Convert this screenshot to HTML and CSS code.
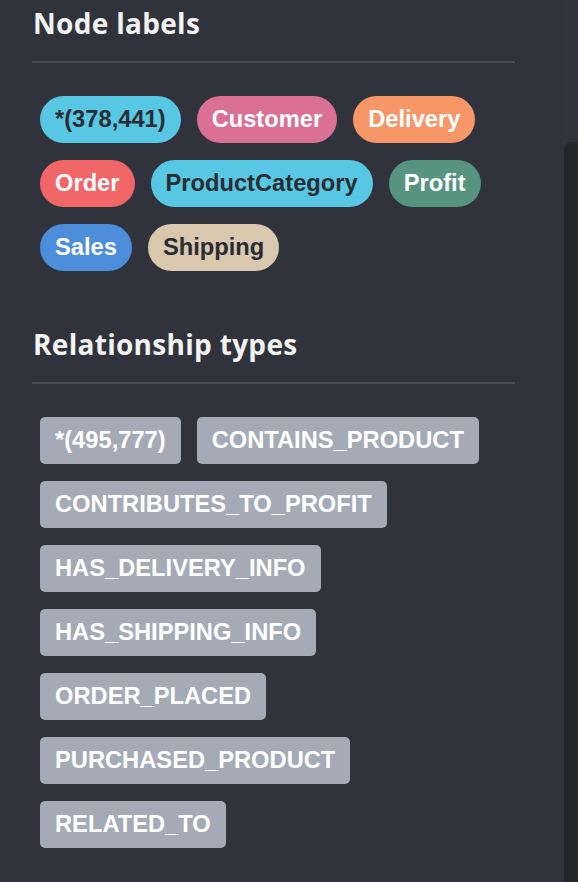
FILE: index.html
```html
<!DOCTYPE html>
<html>
<head>
<meta charset="utf-8">
<link rel="stylesheet" href="styles.css">
</head>
<body>
<div class="layout">
  <main class="panel">
    <section class="section">
      <h3 class="heading">Node labels</h3>
      <div class="pills">
        <span class="pill node c-cyan">*(378,441)</span>
        <span class="pill node c-pink">Customer</span>
        <span class="pill node c-orange">Delivery</span>
        <span class="pill node c-red">Order</span>
        <span class="pill node c-cyan">ProductCategory</span>
        <span class="pill node c-green">Profit</span>
        <span class="pill node c-blue">Sales</span>
        <span class="pill node c-beige">Shipping</span>
      </div>
    </section>
    <section class="section">
      <h3 class="heading">Relationship types</h3>
      <div class="pills">
        <span class="pill rel">*(495,777)</span>
        <span class="pill rel">CONTAINS_PRODUCT</span>
        <span class="pill rel">CONTRIBUTES_TO_PROFIT</span>
        <span class="pill rel">HAS_DELIVERY_INFO</span>
        <span class="pill rel">HAS_SHIPPING_INFO</span>
        <span class="pill rel">ORDER_PLACED</span>
        <span class="pill rel">PURCHASED_PRODUCT</span>
        <span class="pill rel">RELATED_TO</span>
      </div>
    </section>
  </main>
  <aside class="edge">
    <div class="edge-top"></div>
    <div class="edge-block"></div>
  </aside>
</div>
</body>
</html>
```
FILE: styles.css
```css
html, body {
  margin: 0;
  padding: 0;
  background: #30333b;
  height: 100%;
}
.layout {
  display: flex;
  height: 882px;
  overflow: hidden;
}
.panel {
  flex: 0 0 563px;
  padding: 5px 0 0 32px;
  box-sizing: border-box;
}
.section {
  width: 483px;
}
.section + .section {
  margin-top: 55px;
}
.heading {
  margin: 0;
  font-family: "Open Sans", sans-serif;
  font-weight: 700;
  font-size: 28px;
  line-height: 36px;
  color: #f2f2f2;
  letter-spacing: 0.3px;
  padding: 0 0 20px 1px;
  border-bottom: 2px solid #494c54;
}
.pills {
  display: flex;
  flex-wrap: wrap;
  gap: 17px 16px;
  padding: 33px 0 0 8px;
}
.pill {
  font-family: "Liberation Sans", Arial, sans-serif;
  font-weight: 700;
  font-size: 23.7px;
  line-height: 27px;
  padding: 10px 15px;
  color: #ffffff;
  white-space: nowrap;
}
.node {
  border-radius: 24px;
}
.rel {
  border-radius: 5px;
  background: #a5abb6;
}
.c-cyan { background: #57c7e3; color: #2a2c34; }
.c-pink { background: #da7194; }
.c-orange { background: #f79767; }
.c-red { background: #f16667; }
.c-green { background: #569480; }
.c-blue { background: #4c8eda; }
.c-beige { background: #d9c8ae; color: #2a2c34; }
.edge {
  flex: 0 0 15px;
  display: flex;
  flex-direction: column;
  background: #31343c;
}
.edge-top {
  height: 142px;
}
.edge-block {
  flex: 1;
  background: #24262c;
  border-top-left-radius: 7px;
  margin-left: 1px;
}
```
